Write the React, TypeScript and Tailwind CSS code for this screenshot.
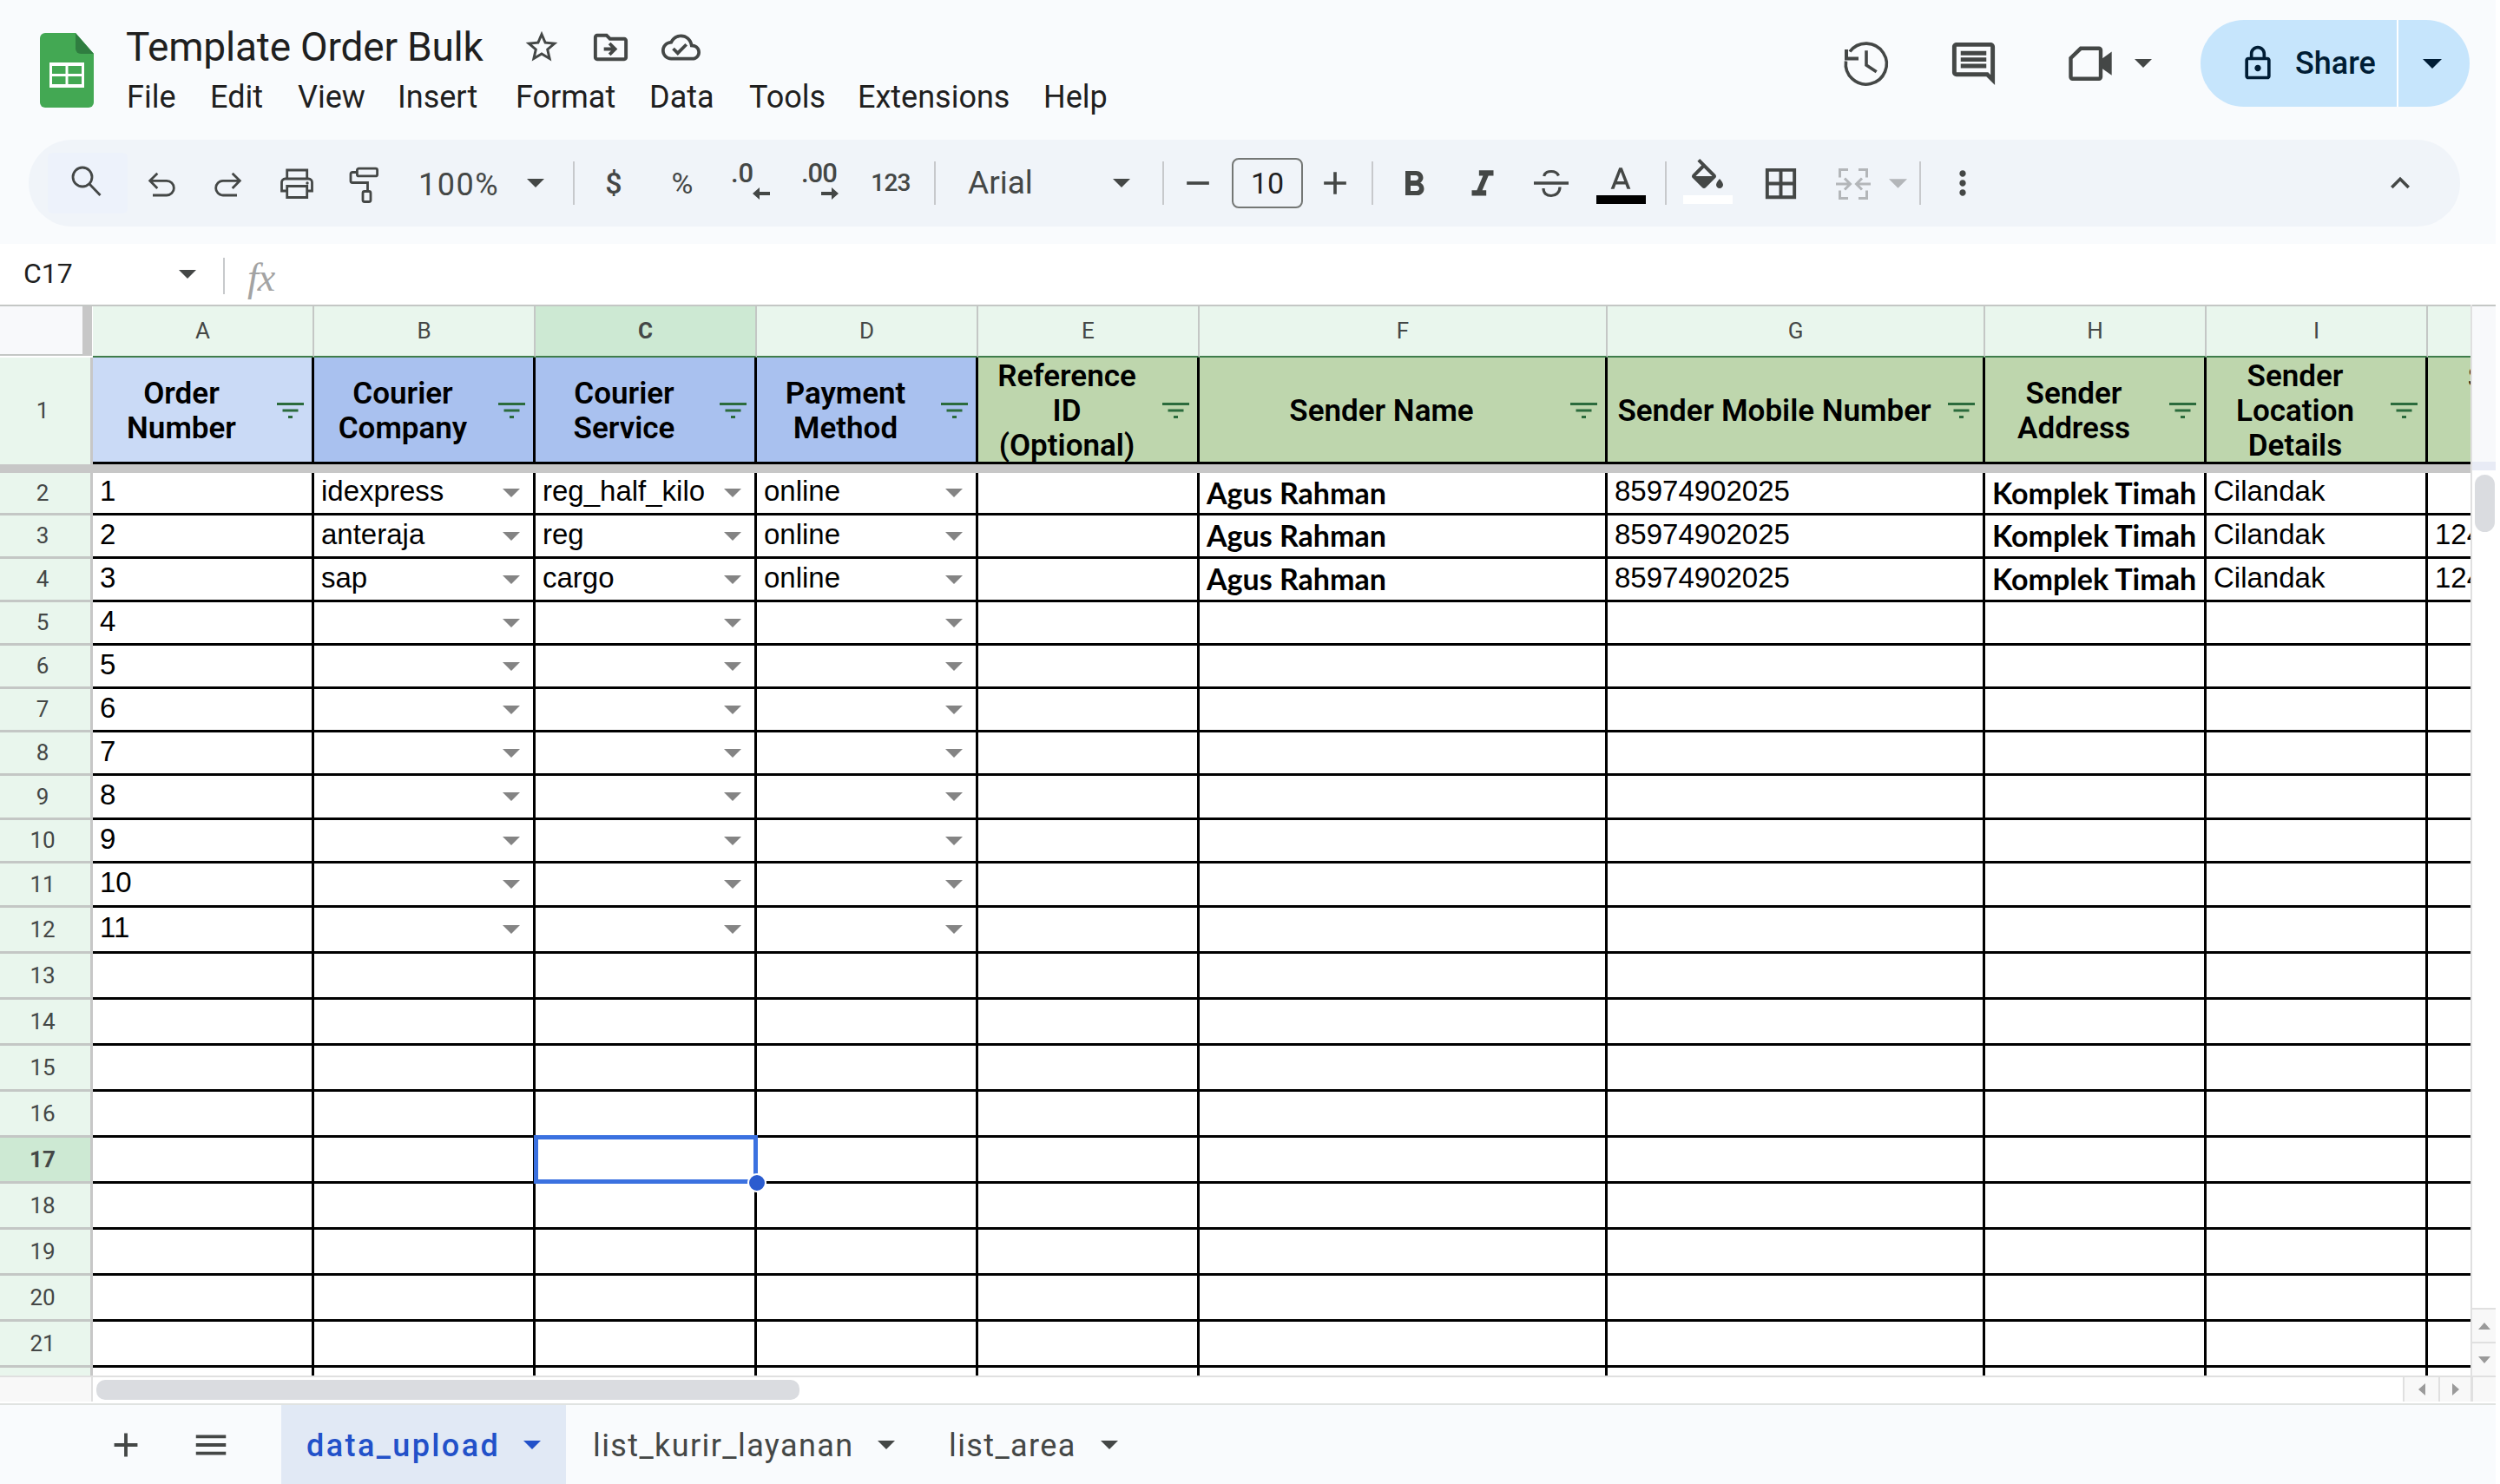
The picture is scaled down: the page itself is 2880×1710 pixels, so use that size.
import React from "react";

const P = {
  star: "M22 9.24l-7.19-.62L12 2 9.19 8.63 2 9.24l5.46 4.73L5.82 21 12 17.27 18.18 21l-1.63-7.03L22 9.24zM12 15.4l-3.76 2.27 1-4.28-3.32-2.88 4.38-.38L12 6.1l1.71 4.04 4.38.38-3.32 2.88 1 4.28L12 15.4z",
  move: "M20 6h-8l-2-2H4c-1.1 0-2 .9-2 2v12c0 1.1.9 2 2 2h16c1.1 0 2-.9 2-2V8c0-1.1-.9-2-2-2zm0 12H4V6h5.17l2 2H20v10zM12 9l-1.4 1.4 1.6 1.6H8v2h4.2l-1.6 1.6L12 17l4-4z",
  cloud: "M19.35 10.04C18.67 6.59 15.64 4 12 4 9.11 4 6.6 5.64 5.35 8.04 2.34 8.36 0 10.91 0 14c0 3.31 2.69 6 6 6h13c2.76 0 5-2.24 5-5 0-2.64-2.05-4.78-4.65-4.96zM19 18H6c-2.21 0-4-1.79-4-4 0-2.05 1.53-3.76 3.56-3.97l1.07-.11.5-.95C8.08 7.14 9.94 6 12 6c2.62 0 4.88 1.86 5.39 4.43l.3 1.5 1.53.11c1.56.1 2.78 1.41 2.78 2.96 0 1.65-1.35 3-3 3zm-9-3.82l-2.09-2.09L6.5 13.5 10 17l6.01-6.01-1.41-1.41z",
  comment: "M20 2H4c-1.1 0-2 .9-2 2v12c0 1.1.9 2 2 2h14l4 4V4c0-1.1-.9-2-2-2zm0 15.17L18.83 16H4V4h16v13.17zM6 12h12v2H6zm0-3h12v2H6zm0-3h12v2H6z",
  lock: "M18 8h-1V6c0-2.76-2.24-5-5-5S7 3.24 7 6v2H6c-1.1 0-2 .9-2 2v10c0 1.1.9 2 2 2h12c1.1 0 2-.9 2-2V10c0-1.1-.9-2-2-2zM9 6c0-1.66 1.34-3 3-3s3 1.34 3 3v2H9V6zm9 14H6V10h12v10zm-6-3c1.1 0 2-.9 2-2s-.9-2-2-2-2 .9-2 2 .9 2 2 2z",
  bold: "M15.6 10.79c.97-.67 1.65-1.77 1.65-2.79 0-2.26-1.75-4-4-4H7v14h7.04c2.09 0 3.71-1.7 3.71-3.79 0-1.52-.86-2.82-2.15-3.42zM10 6.5h3c.83 0 1.5.67 1.5 1.5s-.67 1.5-1.5 1.5h-3v-3zm3.5 9H10v-3h3.5c.83 0 1.5.67 1.5 1.5s-.67 1.5-1.5 1.5z",
  italic: "M10 4v3h2.21l-3.42 8H6v3h8v-3h-2.21l3.42-8H18V4z",
  textA: "M11 3L5.5 17h2.25l1.12-3h6.25l1.12 3h2.25L13 3h-2zm-1.38 9L12 5.67 14.38 12H9.62z",
  fill: "M16.56 8.94L7.62 0 6.21 1.41l2.38 2.38-5.15 5.15c-.59.59-.59 1.54 0 2.12l5.5 5.5c.29.29.68.44 1.06.44s.77-.15 1.06-.44l5.5-5.5c.59-.58.59-1.53 0-2.12zM5.21 10L10 5.21 14.79 10H5.21zM19 11.5s-2 2.17-2 3.5c0 1.1.9 2 2 2s2-.9 2-2c0-1.33-2-3.5-2-3.5z",
  borders: "M3 3v18h18V3H3zm8 16H5v-6h6v6zm0-8H5V5h6v6zm8 8h-6v-6h6v6zm0-8h-6V5h6v6z",
  dots: "M12 8c1.1 0 2-.9 2-2s-.9-2-2-2-2 .9-2 2 .9 2 2 2zm0 2c-1.1 0-2 .9-2 2s.9 2 2 2 2-.9 2-2-.9-2-2-2zm0 6c-1.1 0-2 .9-2 2s.9 2 2 2 2-.9 2-2-.9-2-2-2z",
  chevUp: "M7.41 15.41L12 10.83l4.59 4.58L18 14l-6-6-6 6z",
  minus: "M5 11h14v2H5z",
  plus: "M19 13h-6v6h-2v-6H5v-2h6V5h2v6h6v2z",
  menu: "M3 18h18v-2H3v2zm0-5h18v-2H3v2zm0-7v2h18V6H3z",
};

function Icon({ d, c = "w-[44px] h-[44px] fill-[#444746]", vb = "0 0 24 24" }: { d: string; c?: string; vb?: string }) {
  return (
    <svg viewBox={vb} className={c}>
      <path d={d} fillRule="evenodd" />
    </svg>
  );
}

const stroke44 = "w-[44px] h-[44px] fill-none stroke-[#444746] stroke-[2.8px] overflow-visible";

function SearchIcon() {
  return (
    <svg viewBox="0 0 44 44" className={stroke44}>
      <circle cx="18" cy="15" r="11" />
      <path d="M26 23l12.5 13" />
    </svg>
  );
}
function UndoIcon({ c = "" }: { c?: string }) {
  return (
    <svg viewBox="0 0 44 44" className={`${stroke44} ${c}`}>
      <path d="M17.3 10.7L8.7 19.3l8.6 8.7M9 19.3h19a8.35 8.35 0 0 1 0 16.7H12" />
    </svg>
  );
}
function PrintIcon() {
  return (
    <svg viewBox="0 0 44 44" className={stroke44}>
      <path d="M10.7 17V7h23v10M10 31H4.5V21a4 4 0 0 1 4-4h27a4 4 0 0 1 4 4v10H34M10.7 25.5h23v13h-23z" />
      <circle cx="34" cy="22" r="1.7" className="fill-[#444746] stroke-none" />
    </svg>
  );
}
function PaintIcon() {
  return (
    <svg viewBox="0 0 44 44" className={stroke44}>
      <rect x="13.4" y="5.1" width="23.2" height="8.8" rx="2" />
      <path d="M13 9.5H8a2 2 0 0 0-2 2v8a2 2 0 0 0 2 2h17.5v9" />
      <rect x="20" y="31.5" width="9" height="12" rx="2" />
    </svg>
  );
}
function StrikeIcon() {
  return (
    <svg viewBox="0 0 44 44" className="w-[44px] h-[44px] fill-none stroke-[#444746] stroke-[3.2px] overflow-visible">
      <path d="M2 22h40" className="stroke-[3.6px]" />
      <path d="M30.5 13.5C29 10 25 8.5 22 8.5c-4 0-7.5 2-8.3 5.5M13 28c0 6 4 8.5 9 8.5s10-3.5 10-10" />
    </svg>
  );
}
function MergeIcon() {
  return (
    <svg viewBox="0 0 44 44" className="w-[44px] h-[44px] fill-none stroke-[#b3b6b9] stroke-[3px] overflow-visible">
      <path d="M16 6.5H6.5v9M28 6.5h9.5v9M16 39.5H6.5v-9M28 39.5h9.5v-9" />
      <path d="M2 23h16M12 16.5l6.5 6.5-6.5 6.5M42 23H26M32 16.5L25.5 23l6.5 6.5" />
    </svg>
  );
}
function HistoryIcon() {
  return (
    <svg viewBox="0 0 60 60" className="w-[60px] h-[60px] fill-none stroke-[#444746] stroke-[3.6px] overflow-visible shrink-0">
      <path d="M11 16.5A23.5 23.5 0 1 1 6.5 27.5" />
      <path d="M7 14v10.5h14" className="stroke-[4px]" />
      <path d="M30 15.3V32l11.7 7.7" />
    </svg>
  );
}
function VideoIcon() {
  return (
    <svg viewBox="0 0 60 60" className="w-[60px] h-[60px] fill-none stroke-[#444746] stroke-[4.4px] overflow-visible shrink-0">
      <path d="M19 12.8H40a2 2 0 0 1 2 2V45.7a2 2 0 0 1-2 2H9.5a2 2 0 0 1-2-2V24z" />
      <path d="M43 25L54.7 16.5V43.8L43 35.5z" className="fill-[#444746] stroke-none" />
    </svg>
  );
}

function Caret({ c = "w-[20px] h-[10px] fill-[#444746]" }: { c?: string }) {
  return (
    <svg viewBox="0 0 20 10" className={`${c} shrink-0`}>
      <path d="M0 0h20L10 10z" />
    </svg>
  );
}

function Slot({ w, children }: { w: string; children?: React.ReactNode }) {
  return <div className={`${w} h-full shrink-0 flex items-center justify-center`}>{children}</div>;
}

function Sep() {
  return <div className="w-[2px] h-[50px] shrink-0 bg-[#c7c9cc]" />;
}

const menus: [string, string][] = [
  ["File", "w-[96px]"],
  ["Edit", "w-[101px]"],
  ["View", "w-[115px]"],
  ["Insert", "w-[136px]"],
  ["Format", "w-[154px]"],
  ["Data", "w-[115px]"],
  ["Tools", "w-[125px]"],
  ["Extensions", "w-[214px]"],
  ["Help", "w-[80px]"],
];

function Logo() {
  return (
    <svg viewBox="0 0 62 86" className="w-[62px] h-[86px] shrink-0">
      <path d="M6 0h35l21 24v56a6 6 0 0 1-6 6H6a6 6 0 0 1-6-6V6a6 6 0 0 1 6-6z" fill="#43a853" />
      <path d="M41 0l21 24H47a6 6 0 0 1-6-6z" fill="#2f7d40" />
      <path d="M11 34h40v29H11z" fill="#fff" />
      <path d="M14 38h15.5v9H14zM32.5 38H48v9H32.5zM14 50h15.5v9H14zM32.5 50H48v9H32.5z" fill="#43a853" />
    </svg>
  );
}

function TopBar() {
  return (
    <div className="h-[161px] flex items-start font-['Roboto',sans-serif]">
      <div className="ml-[46px] mt-[38px]">
        <Logo />
      </div>
      <div className="ml-[37px] mt-[29px] flex flex-col">
        <div className="flex items-center h-[50px]">
          <span className="text-[46px] leading-[50px] text-[#1f1f1f] tracking-[-0.2px] w-[457px] shrink-0">Template Order Bulk</span>
          <Icon d={P.star} c="w-[44px] h-[44px] fill-[#444746] shrink-0" />
          <div className="w-[34px] shrink-0" />
          <Icon d={P.move} c="w-[47px] h-[47px] fill-[#444746] shrink-0" />
          <div className="w-[35px] shrink-0" />
          <Icon d={P.cloud} c="w-[45px] h-[45px] fill-[#444746] shrink-0" />
        </div>
        <div className="flex items-center h-[42px] mt-[12px] ml-[1px]">
          {menus.map(([t, w]) => (
            <span key={t} className={`${w} shrink-0 text-[36px] leading-[42px] text-[#1f1f1f]`}>{t}</span>
          ))}
        </div>
      </div>
      <div className="ml-auto mr-[30px] mt-[23px] flex items-center h-[100px]">
        <HistoryIcon />
        <div className="w-[64px]" />
        <Icon d={P.comment} c="w-[59px] h-[59px] fill-[#444746] shrink-0" />
        <div className="w-[75px]" />
        <VideoIcon />
        <div className="w-[21px]" />
        <Caret />
        <div className="w-[56px]" />
        <div className="w-[310px] h-[100px] rounded-full bg-[#c6e5fc] flex items-center overflow-hidden">
          <div className="w-[228px] h-full flex items-center pl-[44px] gap-[21px] border-r-[2px] border-white">
            <Icon d={P.lock} c="w-[44px] h-[44px] fill-[#001d35]" />
            <span className="text-[36px] font-medium text-[#001d35]">Share</span>
          </div>
          <div className="flex-1 flex items-center justify-center pr-[4px]">
            <Caret c="w-[22px] h-[11px] fill-[#001d35]" />
          </div>
        </div>
      </div>
    </div>
  );
}

function Toolbar() {
  return (
    <div className="ml-[33px] w-[2801px] h-[100px] rounded-full bg-[#f0f4f9] flex items-center font-['Roboto',sans-serif] text-[#444746]">
      <div className="ml-[22px] w-[92px] h-[70px] bg-[#edf2fb] flex items-center pl-[22px] shrink-0 rounded-[6px]">
        <SearchIcon />
      </div>
      <div className="flex items-center h-full">
        <Slot w="w-[78px]"><UndoIcon /></Slot>
        <Slot w="w-[76px]"><UndoIcon c="-scale-x-100" /></Slot>
        <Slot w="w-[82px]"><PrintIcon /></Slot>
        <Slot w="w-[74px]"><PaintIcon /></Slot>
        <div className="w-[143px] h-full shrink-0 flex items-center pl-[25px] text-[36px] tracking-[1.5px] pt-[3px]">100%</div>
        <Slot w="w-[34px]"><Caret /></Slot>
        <div className="w-[26px] shrink-0" />
        <Sep />
        <Slot w="w-[90px]"><span className="text-[34px] font-medium">$</span></Slot>
        <Slot w="w-[68px]"><span className="text-[34px]">%</span></Slot>
        <Slot w="w-[94px]">
          <div className="relative w-[44px] h-[44px]">
            <span className="absolute -left-[3px] -top-[9px] text-[31px] font-medium leading-[40px]">.0</span>
            <svg viewBox="0 0 20 16" className="absolute left-[22px] top-[26px] w-[20px] h-[16px] fill-[#444746]"><path d="M20 6H8V1L0 8l8 7v-5h12z" /></svg>
          </div>
        </Slot>
        <Slot w="w-[62px]">
          <div className="relative w-[44px] h-[44px]">
            <span className="absolute left-0 -top-[9px] text-[31px] font-medium leading-[40px] tracking-[-1px]">.00</span>
            <svg viewBox="0 0 20 16" className="absolute left-[23px] top-[26px] w-[20px] h-[16px] fill-[#444746]"><path d="M0 6h12V1l8 7-8 7v-5H0z" /></svg>
          </div>
        </Slot>
        <Slot w="w-[100px]"><span className="text-[28px] tracking-[-0.8px] font-medium">123</span></Slot>
        <Sep />
        <div className="w-[196px] h-full shrink-0 flex items-center pl-[37px] text-[37px]">Arial</div>
        <Slot w="w-[36px]"><Caret /></Slot>
        <div className="w-[29px] shrink-0" />
        <Sep />
        <Slot w="w-[78px]"><Icon d={P.minus} /></Slot>
        <div className="w-[82px] h-[58px] shrink-0 rounded-[8px] border-[2px] border-[#747775] flex items-center justify-center text-[34px] text-[#1f1f1f]">10</div>
        <Slot w="w-[74px]"><Icon d={P.plus} /></Slot>
        <div className="w-[5px] shrink-0" />
        <Sep />
        <Slot w="w-[94px]"><Icon d={P.bold} c="w-[48px] h-[48px] fill-[#444746] translate-y-[2px]" /></Slot>
        <Slot w="w-[64px]"><Icon d={P.italic} c="w-[50px] h-[50px] fill-[#444746] translate-y-[2px]" /></Slot>
        <Slot w="w-[94px]"><StrikeIcon /></Slot>
        <Slot w="w-[66px]">
          <div className="flex flex-col items-center">
            <Icon d={P.textA} c="w-[42px] h-[42px] fill-[#444746]" />
            <div className="w-[57px] h-[10px] bg-black -mt-[5px]" />
          </div>
        </Slot>
        <div className="w-[18px] shrink-0" />
        <Sep />
        <Slot w="w-[94px]">
          <div className="flex flex-col items-center -mt-[4px]">
            <Icon d={P.fill} c="w-[48px] h-[48px] fill-[#444746]" />
            <div className="w-[57px] h-[10px] bg-white -mt-[6px]" />
          </div>
        </Slot>
        <Slot w="w-[74px]"><Icon d={P.borders} c="w-[47px] h-[47px] fill-[#444746]" /></Slot>
        <div className="w-[9px] shrink-0" />
        <Slot w="w-[76px]"><MergeIcon /></Slot>
        <Slot w="w-[26px]"><Caret c="w-[21px] h-[11px] fill-[#b3b6b9]" /></Slot>
        <div className="w-[12px] shrink-0" />
        <Sep />
        <Slot w="w-[96px]"><Icon d={P.dots} /></Slot>
      </div>
      <div className="ml-auto mr-[29px] w-[80px] flex justify-center">
        <Icon d={P.chevUp} />
      </div>
    </div>
  );
}

function FormulaBar() {
  return (
    <div className="h-[70px] bg-white flex items-center font-['Roboto',sans-serif] shrink-0">
      <span className="ml-[27px] w-[179px] text-[32px] text-[#1f1f1f] shrink-0 -mt-[2px]">C17</span>
      <Caret />
      <div className="ml-[31px] w-[2px] h-[42px] bg-[#c7c9cc] mt-[4px]" />
      <span className="ml-[26px] text-[46px] italic text-[#a3a3a3] font-['Liberation_Serif',serif] mt-[6px] tracking-[-1px]">fx</span>
    </div>
  );
}

const colW = [
  "w-[255px]", "w-[255px]", "w-[255px]", "w-[255px]", "w-[255px]",
  "w-[470px]", "w-[435px]", "w-[255px]", "w-[255px]", "w-[49px]",
];
const letters = ["A", "B", "C", "D", "E", "F", "G", "H", "I", ""];

const headers: { t: string[]; bg: string }[] = [
  { t: ["Order", "Number"], bg: "bg-[#cadaf6]" },
  { t: ["Courier", "Company"], bg: "bg-[#a9c1ef]" },
  { t: ["Courier", "Service"], bg: "bg-[#a9c1ef]" },
  { t: ["Payment", "Method"], bg: "bg-[#a9c1ef]" },
  { t: ["Reference", "ID", "(Optional)"], bg: "bg-[#bed6ad]" },
  { t: ["Sender Name"], bg: "bg-[#bed6ad]" },
  { t: ["Sender Mobile Number"], bg: "bg-[#bed6ad]" },
  { t: ["Sender", "Address"], bg: "bg-[#bed6ad]" },
  { t: ["Sender", "Location", "Details"], bg: "bg-[#bed6ad]" },
];

const rowH = [
  "h-[49px]", "h-[50px]", "h-[50px]", "h-[50px]", "h-[50px]", "h-[50px]", "h-[50px]", "h-[51px]", "h-[50px]", "h-[51px]",
  "h-[53px]", "h-[53px]", "h-[53px]", "h-[53px]", "h-[53px]", "h-[53px]", "h-[53px]", "h-[53px]", "h-[53px]", "h-[53px]", "h-[53px]",
];

const filled = [
  { b: "idexpress", c: "reg_half_kilo", j: "" },
  { b: "anteraja", c: "reg", j: "12430" },
  { b: "sap", c: "cargo", j: "12430" },
];

function FilterIcon() {
  return (
    <svg viewBox="0 0 31 18" className="absolute right-[9px] top-[52px] w-[31px] h-[18px] fill-[#2b6b3c]">
      <path d="M0 0h31v3H0zM6.5 7.5h18v3h-18zM13 15h5v3h-5z" />
    </svg>
  );
}

function ColHeaderRow() {
  return (
    <div className="flex h-[59px] shrink-0 font-['Roboto',sans-serif]">
      <div className="w-[95px] h-[57px] shrink-0 bg-[#f8f9fb] border-b-[2px] border-[#c4c7c5]" />
      <div className="w-[11px] h-[57px] shrink-0 bg-[#c7c7c7]" />
      <div className="w-[1px] shrink-0 bg-white" />
      {colW.map((w, i) => (
        <div
          key={i}
          className={`${w} shrink-0 h-full border-b-[2px] border-[#3f7d4b] flex items-center justify-center text-[26px] pb-[1px] text-[#444746] ${i === 2 ? "bg-[#cde9d3] font-bold" : "bg-[#e9f6ed]"} ${i < 9 ? "border-r-[2px] border-r-[#c4c7c5]" : ""}`}
        >
          {letters[i]}
        </div>
      ))}
    </div>
  );
}

function HeaderRow() {
  return (
    <div className="flex h-[123px] shrink-0 font-['Roboto',sans-serif]">
      <div className="w-[107px] shrink-0 bg-[#e9f6ed] border-r-[3px] border-[#c7c7c7] flex items-center justify-center pr-[6px] text-[26px] text-[#444746]">1</div>
      {headers.map((h, i) => (
        <div
          key={i}
          className={`${colW[i]} ${h.bg} shrink-0 relative border-b-[3px] border-r-[3px] border-black pr-[48px] pt-[4px] flex flex-col items-center justify-center text-[35px] leading-[40px] font-semibold text-black whitespace-nowrap`}
        >
          {h.t.map((l) => (
            <span key={l}>{l}</span>
          ))}
          <FilterIcon />
        </div>
      ))}
      <div className="w-[49px] shrink-0 bg-[#bed6ad] border-b-[3px] border-black overflow-hidden pl-[46px] pt-[4px] text-[35px] leading-[40px] font-semibold text-black whitespace-nowrap">Sender</div>
    </div>
  );
}

function Tri() {
  return <Caret c="absolute right-[15px] top-1/2 -translate-y-1/2 w-[20px] h-[10px] fill-[#848484]" />;
}

function DataCell({ w, txt, tri, bold, right = true, sel }: { w: string; txt?: string; tri?: boolean; bold?: boolean; right?: boolean; sel?: boolean }) {
  return (
    <div className={`${w} shrink-0 h-full relative border-b-[3px] border-black ${right ? "border-r-[3px]" : ""} flex items-center pl-[8px] pb-[4px] whitespace-nowrap ${sel ? "" : "overflow-hidden"}`}>
      {txt ? (
        <span className={bold ? "font-['Lato',sans-serif] font-bold text-[34px] text-black pt-[2px]" : "font-['Liberation_Sans',sans-serif] text-[33px] text-black"}>{txt}</span>
      ) : null}
      {tri ? <Tri /> : null}
      {sel ? (
        <div className="absolute -left-[2px] -top-[3px] w-[258px] h-[56px] border-[5px] border-[#3b71e0] z-10">
          <div className="absolute -right-[15px] -bottom-[15px] w-[22px] h-[22px] rounded-full bg-[#2b5ccf] border-[2px] border-white" />
        </div>
      ) : null}
    </div>
  );
}

function DataRow({ idx }: { idx: number }) {
  const n = idx + 2;
  const f = filled[idx];
  const hasOrder = idx < 11;
  const hasDrop = idx < 11;
  const sel = n === 17;
  return (
    <div className={`flex ${rowH[idx]} shrink-0`}>
      <div className={`w-[107px] shrink-0 h-full border-b-[3px] border-r-[3px] border-b-[#c4c7c5] border-r-[#c7c7c7] flex items-center justify-center pr-[6px] font-['Roboto',sans-serif] text-[26px] text-[#444746] ${sel ? "bg-[#cde9d3] font-bold" : "bg-[#e9f6ed]"}`}>{n}</div>
      <DataCell w={colW[0]} txt={hasOrder ? String(idx + 1) : undefined} />
      <DataCell w={colW[1]} txt={f?.b} tri={hasDrop} />
      <DataCell w={colW[2]} txt={f?.c} tri={hasDrop} sel={sel} />
      <DataCell w={colW[3]} txt={f ? "online" : undefined} tri={hasDrop} />
      <DataCell w={colW[4]} />
      <DataCell w={colW[5]} txt={f ? "Agus Rahman" : undefined} bold />
      <DataCell w={colW[6]} txt={f ? "85974902025" : undefined} />
      <DataCell w={colW[7]} txt={f ? "Komplek Timah" : undefined} bold />
      <DataCell w={colW[8]} txt={f ? "Cilandak" : undefined} />
      <DataCell w={colW[9]} txt={f?.j || undefined} right={false} />
    </div>
  );
}

function Grid() {
  return (
    <div className="w-[2846px] h-full flex flex-col overflow-hidden border-t-[2px] border-[#c4c7c5] shrink-0">
      <ColHeaderRow />
      <HeaderRow />
      <div className="h-[10px] bg-[#c7c7c7] shrink-0" />
      {rowH.map((_, i) => (
        <DataRow key={i} idx={i} />
      ))}
      <div className="flex h-[20px] shrink-0">
        <div className="w-[107px] shrink-0 bg-[#e9f6ed] border-r-[3px] border-[#c7c7c7]" />
        {colW.map((w, i) => (
          <div key={i} className={`${w} shrink-0 ${i < 9 ? "border-r-[3px] border-black" : ""}`} />
        ))}
      </div>
    </div>
  );
}

function VScroll() {
  return (
    <div className="w-[29px] h-full shrink-0 flex flex-col border-l-[2px] border-[#e0e0e0]">
      <div className="h-[181px] bg-[#f8f9fb] border-t-[2px] border-[#c4c7c5] shrink-0" />
      <div className="h-[10px] bg-[#e8ebf5] shrink-0" />
      <div className="flex-1 bg-white pt-[5px] pl-[3px]">
        <div className="w-[23px] h-[66px] rounded-full bg-[#dadce0]" />
      </div>
      <div className="h-[39px] bg-[#f8f8f8] border-t-[2px] border-[#e0e0e0] flex items-center justify-center shrink-0">
        <svg viewBox="0 0 14 8" className="w-[14px] h-[8px] fill-[#9a9a9a]"><path d="M7 0l7 8H0z" /></svg>
      </div>
      <div className="h-[39px] bg-[#f8f8f8] border-t-[2px] border-[#e0e0e0] flex items-center justify-center shrink-0">
        <svg viewBox="0 0 14 8" className="w-[14px] h-[8px] fill-[#9a9a9a]"><path d="M7 8l7-8H0z" /></svg>
      </div>
    </div>
  );
}

function HScroll() {
  return (
    <div className="h-[32px] shrink-0 bg-white border-t-[2px] border-[#e0e0e0] flex">
      <div className="w-[107px] h-[28px] shrink-0 bg-[#f8f8f8] border-r-[2px] border-[#e0e0e0]" />
      <div className="pl-[4px] pt-[3px] w-[2661px] h-[28px] shrink-0">
        <div className="w-[810px] h-[23px] rounded-[10px] bg-[#dadce0]" />
      </div>
      <div className="w-[41px] h-[28px] shrink-0 bg-[#f8f8f8] border-l-[2px] border-[#e0e0e0] flex items-center justify-center">
        <svg viewBox="0 0 8 14" className="w-[8px] h-[14px] fill-[#9a9a9a]"><path d="M0 7l8-7v14z" /></svg>
      </div>
      <div className="w-[37px] h-[28px] shrink-0 bg-[#f8f8f8] border-l-[2px] border-[#e0e0e0] flex items-center justify-center">
        <svg viewBox="0 0 8 14" className="w-[8px] h-[14px] fill-[#9a9a9a]"><path d="M8 7L0 0v14z" /></svg>
      </div>
      <div className="flex-1 h-[28px] bg-[#f8f8f8] border-l-[3px] border-[#e0e0e0]" />
    </div>
  );
}

function Tabs() {
  return (
    <div className="h-[93px] shrink-0 bg-[#f9fbfd] border-t-[2px] border-[#e0e3e1] flex font-['Roboto',sans-serif]">
      <div className="ml-[122px] w-[46px] h-full shrink-0 flex items-center">
        <Icon d={P.plus} c="w-[46px] h-[46px] fill-[#444746]" />
      </div>
      <div className="ml-[52px] w-[46px] h-full shrink-0 flex items-center">
        <Icon d={P.menu} c="w-[46px] h-[46px] fill-[#444746]" />
      </div>
      <div className="ml-[58px] w-[328px] h-full shrink-0 bg-[#e1e9f5] flex items-center pl-[29px]">
        <span className="w-[250px] shrink-0 pt-[2px] text-[36px] font-medium tracking-[2.4px] text-[#2251c9]">data_upload</span>
        <Caret c="w-[20px] h-[10px] fill-[#2251c9]" />
      </div>
      <div className="h-full shrink-0 flex items-center pl-[31px]">
        <span className="w-[328px] shrink-0 pt-[2px] text-[36px] tracking-[1.4px] text-[#444746]">list_kurir_layanan</span>
        <Caret />
      </div>
      <div className="h-full shrink-0 flex items-center pl-[62px]">
        <span className="w-[175px] shrink-0 pt-[2px] text-[36px] tracking-[1.4px] text-[#444746]">list_area</span>
        <Caret />
      </div>
    </div>
  );
}

export default function App() {
  return (
    <div className="w-[2880px] h-[1710px] bg-white overflow-hidden">
      <div className="w-[2875px] h-[1710px] flex flex-col">
        <div className="h-[281px] bg-[#f9fbfd] shrink-0">
          <TopBar />
          <Toolbar />
        </div>
        <FormulaBar />
        <div className="h-[1234px] flex shrink-0">
          <Grid />
          <VScroll />
        </div>
        <HScroll />
        <Tabs />
      </div>
    </div>
  );
}
